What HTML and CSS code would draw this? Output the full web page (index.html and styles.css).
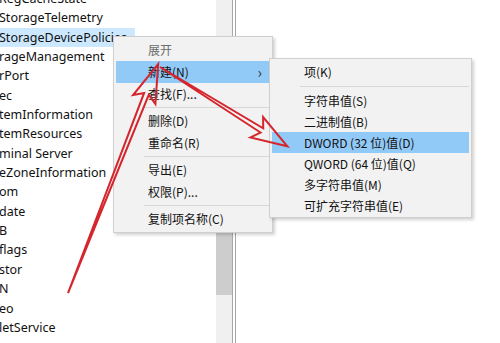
FILE: index.html
```html
<!DOCTYPE html>
<html lang="zh-CN">
<head>
    <meta charset="UTF-8">
    <title>注册表编辑器</title>
    <link rel="stylesheet" href="styles.css">
</head>
<body>
    <div class="window">

        <!-- 左侧树 -->
        <div class="tree">
            <div class="row">RegCacheState</div>
            <div class="row">StorageTelemetry</div>
            <div class="row"><span class="selected">StorageDevicePolicies</span></div>
            <div class="row">rageManagement</div>
            <div class="row">rPort</div>
            <div class="row">ec</div>
            <div class="row">temInformation</div>
            <div class="row">temResources</div>
            <div class="row">minal Server</div>
            <div class="row">eZoneInformation</div>
            <div class="row">om</div>
            <div class="row">date</div>
            <div class="row">B</div>
            <div class="row">flags</div>
            <div class="row">stor</div>
            <div class="row">N</div>
            <div class="row">eo</div>
            <div class="row">letService</div>
        </div>

        <div class="scrollbar">
            <div class="thumb"></div>
        </div>

        <div class="splitter"></div>

        <div class="pane"></div>
    </div>

    <!-- 右键菜单 -->
    <div class="menu main-menu">
        <div class="item disabled">展开</div>
        <div class="item active">新建(N)<span class="more">&#8250;</span></div>
        <div class="item">查找(F)...</div>
        <div class="sep"></div>
        <div class="item">删除(D)</div>
        <div class="item">重命名(R)</div>
        <div class="sep"></div>
        <div class="item">导出(E)</div>
        <div class="item">权限(P)...</div>
        <div class="sep"></div>
        <div class="item">复制项名称(C)</div>
    </div>

    <!-- 新建 子菜单 -->
    <div class="menu sub-menu">
        <div class="item first">项(K)</div>
        <div class="sep"></div>
        <div class="item">字符串值(S)</div>
        <div class="item">二进制值(B)</div>
        <div class="item active">DWORD (32 位)值(D)</div>
        <div class="item">QWORD (64 位)值(Q)</div>
        <div class="item">多字符串值(M)</div>
        <div class="item">可扩充字符串值(E)</div>
    </div>

    <!-- 红色箭头标注 -->
    <svg class="marks" width="500" height="343" viewBox="0 0 500 343">
        <g transform="translate(68,293) rotate(-68.5)">
            <polygon points="0,0 214,-2.5 208,-12 246,0 208,12 214,2.5" />
        </g>
        <g transform="translate(160,67) rotate(31.9)">
            <polygon points="0,0 120,-2.5 114,-12 150,0 114,12 120,2.5" />
        </g>
    </svg>
</body>
</html>
```

FILE: styles.css
```css
body{
    margin: 0;
    width: 500px;
    height: 343px;
    overflow: hidden;
    background: #fff;
    font-family: "Noto Sans", "Noto Sans CJK SC", sans-serif;
    font-size: 12px;
    color: #111;
}

.window{
    display: flex;
    height: 343px;
}

.tree{
    width: 216px;
    overflow: hidden;
    margin-top: -11px;
}

.row{
    height: 19.35px;
    line-height: 19.35px;
    margin-left: -1px;
    white-space: nowrap;
    font-size: 12.5px;
}

.selected{
    display: inline-block;
    background-color: #cce8ff;
    padding-right: 8px;
}

.scrollbar{
    width: 16px;
    background-color: #f0f0f0;
    display: flex;
    flex-direction: column;
}

.thumb{
    margin-top: 120px;
    height: 175px;
    background-color: #cdcdcd;
}

.splitter{
    width: 2px;
    border-left: 1px solid #a8a8a8;
    border-right: 1px solid #a8a8a8;
}

.pane{
    flex: 1;
    background: #fff;
}

/* 菜单 */
.menu{
    position: absolute;
    background-color: #f2f2f2;
    border: 1px solid #cfcfcf;
    box-shadow: 2px 2px 3px rgba(0, 0, 0, 0.18);
    box-sizing: border-box;
    font-family: "Noto Sans CJK SC", sans-serif;
}

.main-menu{
    left: 113px;
    top: 36px;
    width: 160px;
    height: 197px;
    padding: 2px 2px;
}

.main-menu .item{
    height: 22px;
    line-height: 22px;
    padding-left: 32px;
    position: relative;
}

.sub-menu{
    left: 269px;
    top: 58px;
    width: 203px;
    height: 160px;
    padding: 2px 2px;
}

.sub-menu .item{
    height: 21px;
    line-height: 21px;
    padding-left: 32px;
}

.sub-menu .item.first{
    height: 22px;
    line-height: 22px;
}

.item.disabled{
    color: #6d6d6d;
}

.item.active{
    background-color: #91c9f7;
}

.more{
    position: absolute;
    right: 8px;
    top: 0;
    font-size: 15px;
    color: #333;
}

.sep{
    height: 1px;
    background-color: #d7d7d7;
    margin: 2px 0 2px 28px;
}

.sub-menu .sep{
    margin: 3px 0 3px 28px;
}

.marks{
    position: absolute;
    left: 0;
    top: 0;
    pointer-events: none;
}

.marks polygon{
    fill: none;
    stroke: #d4262d;
    stroke-width: 2;
    stroke-linejoin: miter;
}
```
